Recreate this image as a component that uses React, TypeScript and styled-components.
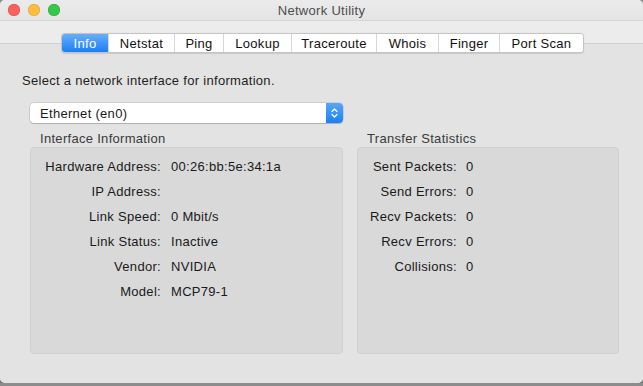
import React from "react";
import styled, { createGlobalStyle } from "styled-components";

const Global = createGlobalStyle`
  html, body { margin: 0; padding: 0; background: #8c8c8c; }
  body { font-family: "Liberation Sans", Arial, sans-serif; font-size: 13px; letter-spacing: 0.3px; -webkit-font-smoothing: antialiased; }
`;

const Window = styled.div`
  width: 643px;
  height: 383px;
  display: flex;
  flex-direction: column;
  background: #ececec;
  border-radius: 5px;
  overflow: hidden;
  box-shadow: 0 2px 3px rgba(0,0,0,0.35);
`;

const TitleBar = styled.div`
  height: 21px;
  flex: none;
  display: grid;
  grid-template-columns: 80px 1fr 80px;
  align-items: center;
  background: linear-gradient(#ebebeb, #e4e4e4);
  border-bottom: 1px solid #d6d6d6;
  box-sizing: border-box;
`;

const Lights = styled.div`
  display: flex;
  gap: 8px;
  padding-left: 8px;
`;

const Light = styled.span<{ $c: string; $b: string }>`
  width: 12px;
  height: 12px;
  border-radius: 50%;
  background: ${(p) => p.$c};
  box-shadow: inset 0 0 0 0.5px ${(p) => p.$b};
`;

const Title = styled.div`
  text-align: center;
  color: #4d4d4d;
  font-size: 13px;
`;

const ToolbarSpace = styled.div`
  height: 22px;
  flex: none;
  background: #ececec;
`;

const TabView = styled.div`
  flex: 1;
  display: flex;
  flex-direction: column;
  background: #e3e3e3;
  border-top: 1px solid #cfcfcf;
`;

const TabBar = styled.div`
  align-self: center;
  margin-top: -11px;
  display: flex;
  height: 20px;
  box-sizing: border-box;
  background: #fff;
  border: 1px solid #c4c4c4;
  border-radius: 4px;
  box-shadow: 0 0.5px 1px rgba(0,0,0,0.12);
  overflow: hidden;
  transform: translateX(1px);
`;

const Tab = styled.div<{ $active?: boolean; $w: number }>`
  width: ${(p) => p.$w}px;
  display: flex;
  align-items: center;
  justify-content: center;
  font-size: 13px;
  color: ${(p) => (p.$active ? "#fff" : "#111")};
  background: ${(p) => (p.$active ? "linear-gradient(#68aef8, #1a7ff6)" : "#fff")};
  border-left: ${(p) => (p.$active ? "none" : "1px solid #d8d8d8")};
  &:first-child { border-left: none; }
  box-sizing: border-box;
`;

const Body = styled.div`
  flex: 1;
  display: flex;
  flex-direction: column;
  padding: 20px 24px 29px 22px;
`;

const Prompt = styled.div`
  color: #1e1e1e;
  font-size: 13px;
  line-height: 16px;
`;

const Select = styled.div`
  margin: 14px 0 0 8px;
  width: 313px;
  height: 20px;
  box-sizing: border-box;
  display: flex;
  background: #fff;
  border-radius: 4px;
  box-shadow: 0 0 0 0.5px rgba(0,0,0,0.18), 0 1px 1px rgba(0,0,0,0.15);
  overflow: hidden;
`;

const SelectText = styled.div`
  flex: 1;
  padding-left: 10px;
  display: flex;
  align-items: center;
  color: #1a1a1a;
  font-size: 13px;
`;

const Stepper = styled.div`
  width: 17px;
  background: linear-gradient(#5aa5f8, #1b7ff6);
  display: flex;
  align-items: center;
  justify-content: center;
`;

const Columns = styled.div`
  flex: 1;
  margin: 8px 0 0 8px;
  display: grid;
  grid-template-columns: 313px 262px;
  column-gap: 14px;
`;

const Group = styled.div`
  display: flex;
  flex-direction: column;
`;

const GroupLabel = styled.div`
  padding-left: 10px;
  height: 16px;
  line-height: 16px;
  color: #3a3a3a;
  font-size: 13px;
`;

const Box = styled.div`
  flex: 1;
  background: #d9d9d9;
  border: 1px solid #d0d0d0;
  border-radius: 4px;
  padding-top: 10px;
  box-sizing: border-box;
`;

const Row = styled.div<{ $lw: number; $gap: number }>`
  display: grid;
  grid-template-columns: ${(p) => p.$lw}px 1fr;
  column-gap: ${(p) => p.$gap}px;
  height: 25px;
  line-height: 18px;
  font-size: 13px;
  color: #1a1a1a;
`;

const Label = styled.div`
  text-align: right;
`;

const Value = styled.div``;

const tabs: [string, number][] = [
  ["Info", 46],
  ["Netstat", 66],
  ["Ping", 49],
  ["Lookup", 68],
  ["Traceroute", 85],
  ["Whois", 62],
  ["Finger", 61],
  ["Port Scan", 84],
];

const info: [string, string][] = [
  ["Hardware Address:", "00:26:bb:5e:34:1a"],
  ["IP Address:", ""],
  ["Link Speed:", "0 Mbit/s"],
  ["Link Status:", "Inactive"],
  ["Vendor:", "NVIDIA"],
  ["Model:", "MCP79-1"],
];

const stats: [string, string][] = [
  ["Sent Packets:", "0"],
  ["Send Errors:", "0"],
  ["Recv Packets:", "0"],
  ["Recv Errors:", "0"],
  ["Collisions:", "0"],
];

export default function App() {
  return (
    <>
      <Global />
      <Window>
        <TitleBar>
          <Lights>
            <Light $c="#fc605c" $b="#de4a46" />
            <Light $c="#fdbc40" $b="#dea133" />
            <Light $c="#34c84a" $b="#27a83a" />
          </Lights>
          <Title>Network Utility</Title>
          <span />
        </TitleBar>
        <ToolbarSpace />
        <TabView>
          <TabBar>
            {tabs.map(([t, w], i) => (
              <Tab key={t} $w={w} $active={i === 0}>
                {t}
              </Tab>
            ))}
          </TabBar>
          <Body>
            <Prompt>Select a network interface for information.</Prompt>
            <Select>
              <SelectText>Ethernet (en0)</SelectText>
              <Stepper>
                <svg width="9" height="14" viewBox="0 0 9 14">
                  <path d="M2 5.5 L4.5 3 L7 5.5 M2 8.5 L4.5 11 L7 8.5" fill="none" stroke="#fff" strokeWidth="1.3" strokeLinecap="round" strokeLinejoin="round" />
                </svg>
              </Stepper>
            </Select>
            <Columns>
              <Group>
                <GroupLabel>Interface Information</GroupLabel>
                <Box>
                  {info.map(([l, v]) => (
                    <Row key={l} $lw={130} $gap={10}>
                      <Label>{l}</Label>
                      <Value>{v}</Value>
                    </Row>
                  ))}
                </Box>
              </Group>
              <Group>
                <GroupLabel>Transfer Statistics</GroupLabel>
                <Box>
                  {stats.map(([l, v]) => (
                    <Row key={l} $lw={99} $gap={9}>
                      <Label>{l}</Label>
                      <Value>{v}</Value>
                    </Row>
                  ))}
                </Box>
              </Group>
            </Columns>
          </Body>
        </TabView>
      </Window>
    </>
  );
}
